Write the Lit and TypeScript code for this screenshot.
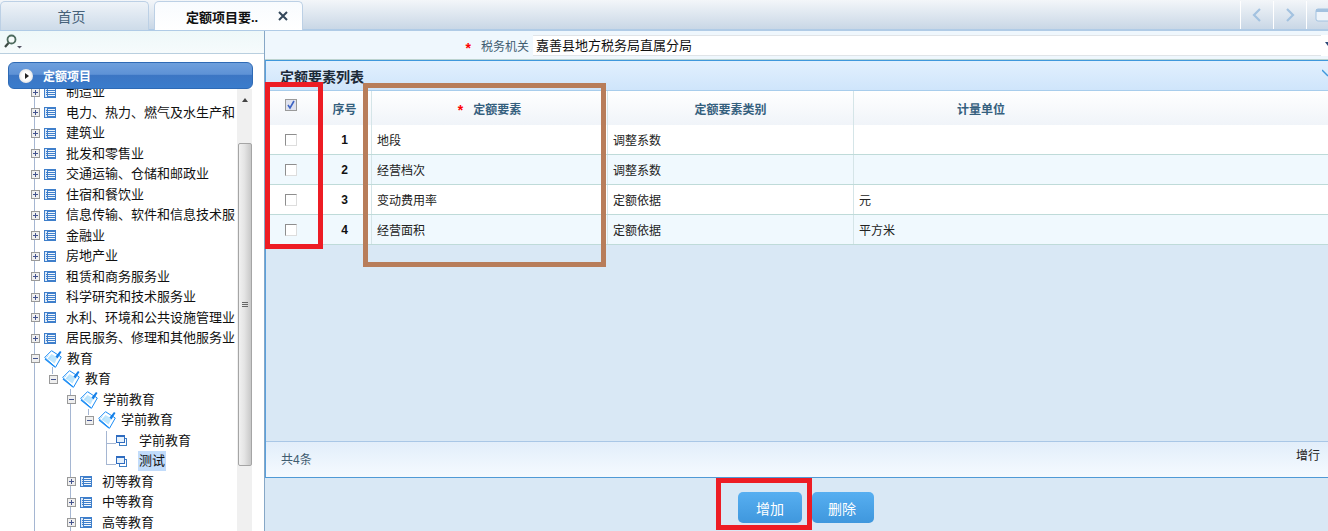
import { LitElement, html, css, svg } from "lit";
import { customElement } from "lit/decorators.js";

type Row = { t: string; d: number; k: "list" | "book" | "leaf"; open?: boolean; sel?: boolean };

const tree: Row[] = [
  { t: "制造业", d: 0, k: "list" },
  { t: "电力、热力、燃气及水生产和", d: 0, k: "list" },
  { t: "建筑业", d: 0, k: "list" },
  { t: "批发和零售业", d: 0, k: "list" },
  { t: "交通运输、仓储和邮政业", d: 0, k: "list" },
  { t: "住宿和餐饮业", d: 0, k: "list" },
  { t: "信息传输、软件和信息技术服", d: 0, k: "list" },
  { t: "金融业", d: 0, k: "list" },
  { t: "房地产业", d: 0, k: "list" },
  { t: "租赁和商务服务业", d: 0, k: "list" },
  { t: "科学研究和技术服务业", d: 0, k: "list" },
  { t: "水利、环境和公共设施管理业", d: 0, k: "list" },
  { t: "居民服务、修理和其他服务业", d: 0, k: "list" },
  { t: "教育", d: 0, k: "book", open: true },
  { t: "教育", d: 1, k: "book", open: true },
  { t: "学前教育", d: 2, k: "book", open: true },
  { t: "学前教育", d: 3, k: "book", open: true },
  { t: "学前教育", d: 4, k: "leaf" },
  { t: "测试", d: 4, k: "leaf", sel: true },
  { t: "初等教育", d: 2, k: "list" },
  { t: "中等教育", d: 2, k: "list" },
  { t: "高等教育", d: 2, k: "list" },
];

const items = [
  { n: 1, name: "地段", type: "调整系数", unit: "" },
  { n: 2, name: "经营档次", type: "调整系数", unit: "" },
  { n: 3, name: "变动费用率", type: "定额依据", unit: "元" },
  { n: 4, name: "经营面积", type: "定额依据", unit: "平方米" },
];

const listIcon = html`<svg width="12" height="11" viewBox="0 0 12 11">
  <rect width="12" height="11" fill="#3f7fcb" />
  <path d="M1 1h2v9H1z" fill="#dfeaf7" />
  <path d="M2 3.5h1M2 5.5h1M2 7.5h1" stroke="#3f7fcb" />
  <path d="M4 2.5h7M4 4.5h7M4 6.5h7M4 8.5h7" stroke="#f2f7fc" />
</svg>`;

const bookIcon = html`<svg width="18" height="18" viewBox="0 0 18 18">
  <path d="M0.7 7.5L7.5 0.7l9.8 6.3-5.8 10.3z" fill="#fff" stroke="#1a8cf5" />
  <path d="M3.5 8.5l7 5 3-6-6-3.5z" fill="#bfe6fd" />
  <path d="M1 9l10 8" stroke="#1a8cf5" stroke-width="1.2" />
  <path d="M11.5 6.5l4.5-5.5 1.5 1-4 6.5z" fill="#1580e8" />
  <path d="M2.5 7.5l2-2M4 9.5l3-3" stroke="#9fd6fb" stroke-width=".8" />
</svg>`;

const leafIcon = html`<svg width="11" height="11" viewBox="0 0 11 11">
  <rect x="3.5" y="3.5" width="7" height="7" fill="#fff" stroke="#3f7fc4" />
  <rect x="0" y="0" width="9" height="8" fill="#2f6cc0" />
  <rect x="1" y="2" width="7" height="5" fill="#e6f1fb" />
</svg>`;

const toggle = (open: boolean) => html`<svg class="tg" width="9" height="9" viewBox="0 0 9 9">
  <rect x="0.5" y="0.5" width="8" height="8" fill="#efefef" stroke="#999" />
  <path d="${open ? "M2 4.5h5" : "M2 4.5h5M4.5 2v5"}" stroke="#44548e" />
</svg>`;

const chevron = (d: string) => svg`<path d="${d}" fill="none" stroke="#a3c2e0" stroke-width="2.2" />`;

@customElement("app-root")
export class AppRoot extends LitElement {
  static styles = css`
    :host {
      display: block;
      position: relative;
      width: 1328px;
      height: 531px;
      overflow: hidden;
      font-family: "Liberation Sans", "Noto Sans CJK SC", sans-serif;
      font-size: 12px;
      color: #222;
      background: #d9e8f5;
    }
    .tabs {
      height: 28px;
      display: flex;
      align-items: flex-end;
      gap: 5px;
      padding-top: 1px;
      background: linear-gradient(#f3f6f9, #c9d7e6);
      border-bottom: 2px solid #b0cbe6;
    }
    .tab {
      width: 149px;
      height: 29px;
      margin-bottom: -1px;
      box-sizing: border-box;
      border: 1px solid #bcd0e5;
      border-bottom: none;
      border-radius: 5px 5px 0 0;
      background: linear-gradient(#eef3f8, #cddbe9);
      color: #46627a;
      font-size: 14px;
      display: flex;
      align-items: center;
      justify-content: center;
      padding-right: 6px;
    }
    .tab.on {
      background: linear-gradient(#f8fbfe, #fff);
      color: #111;
      font-size: 13px;
      font-weight: bold;
      justify-content: flex-start;
      padding: 0 14px 0 31px;
    }
    .tab .lbl { flex: 1; }
    .nav {
      margin-left: auto;
      display: flex;
      height: 28px;
      width: 88px;
      flex: none;
    }
    .nav div {
      width: 33px;
      height: 28px;
      box-sizing: border-box;
      border-left: 1px solid #fff;
      display: flex;
      align-items: center;
      justify-content: center;
    }
    .nav .win { width: 22px; justify-content: flex-start; padding-left: 8px; }
    .main { display: flex; height: 501px; }
    .left {
      width: 265px;
      flex: none;
      box-sizing: border-box;
      border-right: 1px solid #86a7c6;
      background: #fff;
      display: flex;
      flex-direction: column;
    }
    .search {
      height: 22px;
      flex: none;
      background: linear-gradient(#eef8f9, #f6fbfc);
      border-bottom: 1px solid #b9cfdf;
      display: flex;
      align-items: center;
      padding-left: 2px;
    }
    .acc {
      margin: 8px 11px 0 8px;
      height: 27px;
      flex: none;
      box-sizing: border-box;
      border: 1px solid #2e6ab5;
      border-radius: 6px;
      background: linear-gradient(#6e9fdc 0%, #5e92d6 45%, #3c76c4 50%, #3a7ccc 100%);
      color: #fff;
      font-weight: bold;
      display: flex;
      align-items: center;
      gap: 10px;
      padding-left: 10px;
    }
    .dot {
      width: 14px;
      height: 14px;
      border-radius: 50%;
      background: radial-gradient(circle, #fff 40%, #cfcfcf 100%);
      display: flex;
      align-items: center;
      justify-content: center;
    }
    .dot::after {
      content: "";
      border-left: 4px solid #222;
      border-top: 3px solid transparent;
      border-bottom: 3px solid transparent;
      margin-left: 2px;
    }
    .treewrap {
      position: relative;
      flex: 1;
      min-height: 0;
      overflow: hidden;
      display: flex;
      margin-right: 12px;
    }
    .tree {
      flex: 1;
      min-width: 0;
      margin-top: -7px;
      position: relative;
    }
    .row {
      height: 20.5px;
      display: flex;
      align-items: center;
      white-space: nowrap;
      font-size: 13px;
      color: #111;
      position: relative;
    }
    .tg { flex: none; position: relative; z-index: 1; }
    .spacer { width: 9px; flex: none; }
    .ic {
      width: 18px;
      margin-left: 4px;
      margin-right: 5px;
      flex: none;
      display: flex;
      align-items: center;
      position: relative;
      z-index: 1;
    }
    .leafrow .ic { width: 12px; margin-right: 11px; }
    .lab { padding: 0 1px; line-height: 20px; margin-left: -2px; }
    .leafrow .lab, .bookrow .lab { margin-left: -1px; }
    .sel { background: #c2dcfb; }
    .g { position: absolute; background: #a5b6d2; }
    .scroll {
      width: 15px;
      flex: none;
      background: #f0f0f0;
      display: flex;
      flex-direction: column;
      align-items: center;
    }
    .up {
      margin-top: 9px;
      border-left: 3px solid transparent;
      border-right: 3px solid transparent;
      border-bottom: 4px solid #444;
    }
    .thumb {
      margin-top: 41px;
      width: 14px;
      height: 323px;
      box-sizing: border-box;
      border: 1px solid #a5a5a5;
      border-radius: 2px;
      background: linear-gradient(90deg, #f1f1f1, #e4e4e4 45%, #c8c8c8);
      display: flex;
      align-items: center;
      justify-content: center;
    }
    .grip { width: 6px; height: 6px; background: repeating-linear-gradient(#666 0 1px, transparent 1px 2px); }
    .right { flex: 1; min-width: 0; display: flex; flex-direction: column; }
    .form {
      height: 28px;
      flex: none;
      background: #eff7fd;
      border-bottom: 1px solid #bcd3cf;
      display: flex;
      align-items: center;
    }
    .flabel {
      width: 264px;
      flex: none;
      text-align: right;
      color: #3f5c70;
      margin-right: 4px;
    }
    .star {
      color: #f00;
      font-weight: bold;
      font-size: 14px;
      line-height: 12px;
      margin-right: 10px;
      position: relative;
      top: 2px;
    }
    .input {
      flex: 1;
      height: 21px;
      box-sizing: border-box;
      background: #fff;
      border-top: 1px solid #e0e4e8;
      border-bottom: 1px solid #e0e4e8;
      font-size: 13px;
      line-height: 19px;
      padding-left: 3px;
      color: #111;
    }
    .dd { width: 7px; flex: none; height: 21px; position: relative; background: #fff; }
    .dd::after {
      content: "";
      position: absolute;
      right: 0;
      top: 7px;
      border-left: 3px solid transparent;
      border-top: 4px solid #2a4a78;
    }
    .panel {
      flex: 1;
      min-height: 0;
      display: flex;
      flex-direction: column;
      border-left: 1px solid #5aa0dc;
      border-top: 1px solid #3f98dc;
      border-bottom: 1px solid #4f9ad6;
    }
    .phead {
      height: 30px;
      flex: none;
      box-sizing: border-box;
      background: linear-gradient(#e2f0fe, #cfe5fb);
      border-bottom: 1px solid #a8cdec;
      font-size: 14px;
      font-weight: bold;
      color: #1c2a38;
      display: flex;
      align-items: center;
      justify-content: space-between;
      padding: 0 0 0 14px;
    }
    .phead svg { margin-bottom: 6px; }
    .grid {
      display: grid;
      grid-template-columns: 52px 54px 236px 246px 254px 1fr;
    }
    .thead {
      height: 34px;
      background: linear-gradient(#fff, #f0f4f9);
      color: #35607e;
      font-weight: bold;
    }
    .thead > div {
      display: flex;
      align-items: center;
      justify-content: center;
      border-right: 1px solid #d5e5e8;
    }
    .thead > div:first-child, .thead > div:last-child, .thead > div:nth-child(5) { border-right: none; }
    .tr {
      height: 30px;
      box-sizing: border-box;
      border-bottom: 1px solid #bfdbd9;
      background: #fff;
      color: #222;
    }
    .tr.alt { background: #f0f9fe; }
    .tr > div {
      display: flex;
      align-items: center;
      padding-left: 5px;
      border-right: 1px solid #d5e5e8;
    }
    .tr > .c { justify-content: center; padding: 1px 2px 0 0; border-right: none; }
    .tr > .num { font-weight: bold; color: #111; justify-content: center; padding: 0; }
    .tr > div:nth-child(5), .tr > div:nth-child(6) { border-right: none; }
    .cb {
      width: 12px;
      height: 12px;
      box-sizing: border-box;
      border: 1px solid #8e8e8e;
      border-right-color: #ddd;
      border-bottom-color: #ddd;
      background: #fff;
      display: block;
    }
    .cbon { display: block; margin: -6px 2px 0 0; }
    .blank { flex: 1; background: #d9e8f5; }
    .foot {
      height: 35px;
      flex: none;
      border-top: 1px solid #a9c7e6;
      background: linear-gradient(#e2eefa, #f5faff);
      display: flex;
      justify-content: space-between;
      padding: 0 8px 0 15px;
    }
    .foot .count { color: #3f5c70; line-height: 36px; }
    .foot .add { color: #222; padding-top: 4px; }
    .btns {
      height: 54px;
      flex: none;
      display: flex;
      gap: 10px;
      padding: 14px 0 0 473px;
      box-sizing: border-box;
    }
    .btn {
      width: 64px;
      height: 31px;
      border-radius: 5px;
      background: linear-gradient(#57aff1, #3f97dd);
      color: #fff;
      font-size: 14px;
      display: flex;
      align-items: center;
      justify-content: center;
      box-sizing: border-box;
    }
    .btn.b2 { width: 62px; padding-right: 2px; }
    .mark { position: absolute; box-sizing: border-box; border: 5px solid #ed1c24; pointer-events: none; }
    .m1 { left: 265px; top: 82px; width: 58px; height: 167px; }
    .m2 { left: 363px; top: 83px; width: 243px; height: 184px; border-color: #b87d5a; }
    .m3 { left: 716px; top: 478px; width: 96px; height: 52px; }
  `;

  private treeRow(r: Row) {
    const kind = r.k === "leaf" ? "leafrow" : r.k === "book" ? "bookrow" : "";
    return html`<div class="row ${kind}" style="padding-left:${31 + r.d * 18}px">
      ${r.k === "leaf" ? html`<span class="spacer"></span>` : toggle(!!r.open)}
      <span class="ic">${r.k === "list" ? listIcon : r.k === "book" ? bookIcon : leafIcon}</span>
      <span class="lab ${r.sel ? "sel" : ""}">${r.t}</span>
    </div>`;
  }

  render() {
    return html`
      <div class="tabs">
        <div class="tab">首页</div>
        <div class="tab on">
          <span class="lbl">定额项目要..</span>
          <svg width="10" height="10" viewBox="0 0 10 10"><path d="M1 1l8 8M9 1l-8 8" stroke="#33475a" stroke-width="2" /></svg>
        </div>
        <div class="nav">
          <div><svg width="10" height="16" viewBox="0 0 10 16">${chevron("M8 2L2 8l6 6")}</svg></div>
          <div><svg width="10" height="16" viewBox="0 0 10 16">${chevron("M2 2l6 6-6 6")}</svg></div>
          <div class="win">
            <svg width="13" height="14" viewBox="0 0 13 14"><rect x="1" y="1" width="18" height="12" rx="2" fill="#eef4fa" stroke="#a3c2e0" /><rect x="1" y="1" width="18" height="3" fill="#a3c2e0" /></svg>
          </div>
        </div>
      </div>
      <div class="main">
        <div class="left">
          <div class="search">
            <svg width="22" height="18" viewBox="0 0 22 18">
              <circle cx="9.5" cy="6.5" r="4" fill="#f6fbfb" stroke="#4d6b5e" stroke-width="1.8" />
              <path d="M6.5 10l-3.5 4" stroke="#3c4a44" stroke-width="2.2" />
              <path d="M15 13h5l-2.5 2.5z" fill="#556" />
            </svg>
          </div>
          <div class="acc"><span class="dot"></span><span>定额项目</span></div>
          <div class="treewrap">
            <div class="tree">
              ${tree.map((r) => this.treeRow(r))}
              <i class="g" style="left:34px;top:0;width:1px;height:460px"></i>
              <i class="g" style="left:52px;top:285px;width:1px;height:7px"></i>
              <i class="g" style="left:70px;top:307px;width:1px;height:153px"></i>
              <i class="g" style="left:88px;top:327px;width:1px;height:6px"></i>
              <i class="g" style="left:106px;top:349px;width:1px;height:33px"></i>
              <i class="g" style="left:106px;top:361px;width:10px;height:1px"></i>
              <i class="g" style="left:106px;top:382px;width:10px;height:1px"></i>
            </div>
            <div class="scroll"><span class="up"></span><div class="thumb"><span class="grip"></span></div></div>
          </div>
        </div>
        <div class="right">
          <div class="form">
            <div class="flabel"><span class="star">*</span>税务机关</div>
            <div class="input">嘉善县地方税务局直属分局</div>
            <span class="dd"></span>
          </div>
          <div class="panel">
            <div class="phead"><span>定额要素列表</span>
              <svg width="6" height="8" viewBox="0 0 6 8"><path d="M0 1l6 6" stroke="#3f98dc" stroke-width="1.4" /></svg>
            </div>
            <div class="grid thead">
              <div>
                <svg class="cbon" width="12" height="12" viewBox="0 0 12 12">
                  <rect x="0.5" y="0.5" width="11" height="11" fill="#dfe2ee" stroke="#9a9a9a" />
                  <path d="M3 6l2 3 4-7" fill="none" stroke="#3b62c4" stroke-width="1.6" />
                </svg>
              </div>
              <div>序号</div>
              <div><span class="star">*</span>定额要素</div>
              <div>定额要素类别</div>
              <div>计量单位</div>
              <div></div>
            </div>
            ${items.map(
              (it, i) => html`<div class="grid tr ${i % 2 ? "alt" : ""}">
                <div class="c"><span class="cb"></span></div>
                <div class="num">${it.n}</div>
                <div>${it.name}</div>
                <div>${it.type}</div>
                <div>${it.unit}</div>
                <div></div>
              </div>`
            )}
            <div class="blank"></div>
            <div class="foot"><span class="count">共4条</span><span class="add">增行</span></div>
          </div>
          <div class="btns"><div class="btn">增加</div><div class="btn b2">删除</div></div>
        </div>
      </div>
      <div class="mark m1"></div>
      <div class="mark m2"></div>
      <div class="mark m3"></div>
    `;
  }
}
